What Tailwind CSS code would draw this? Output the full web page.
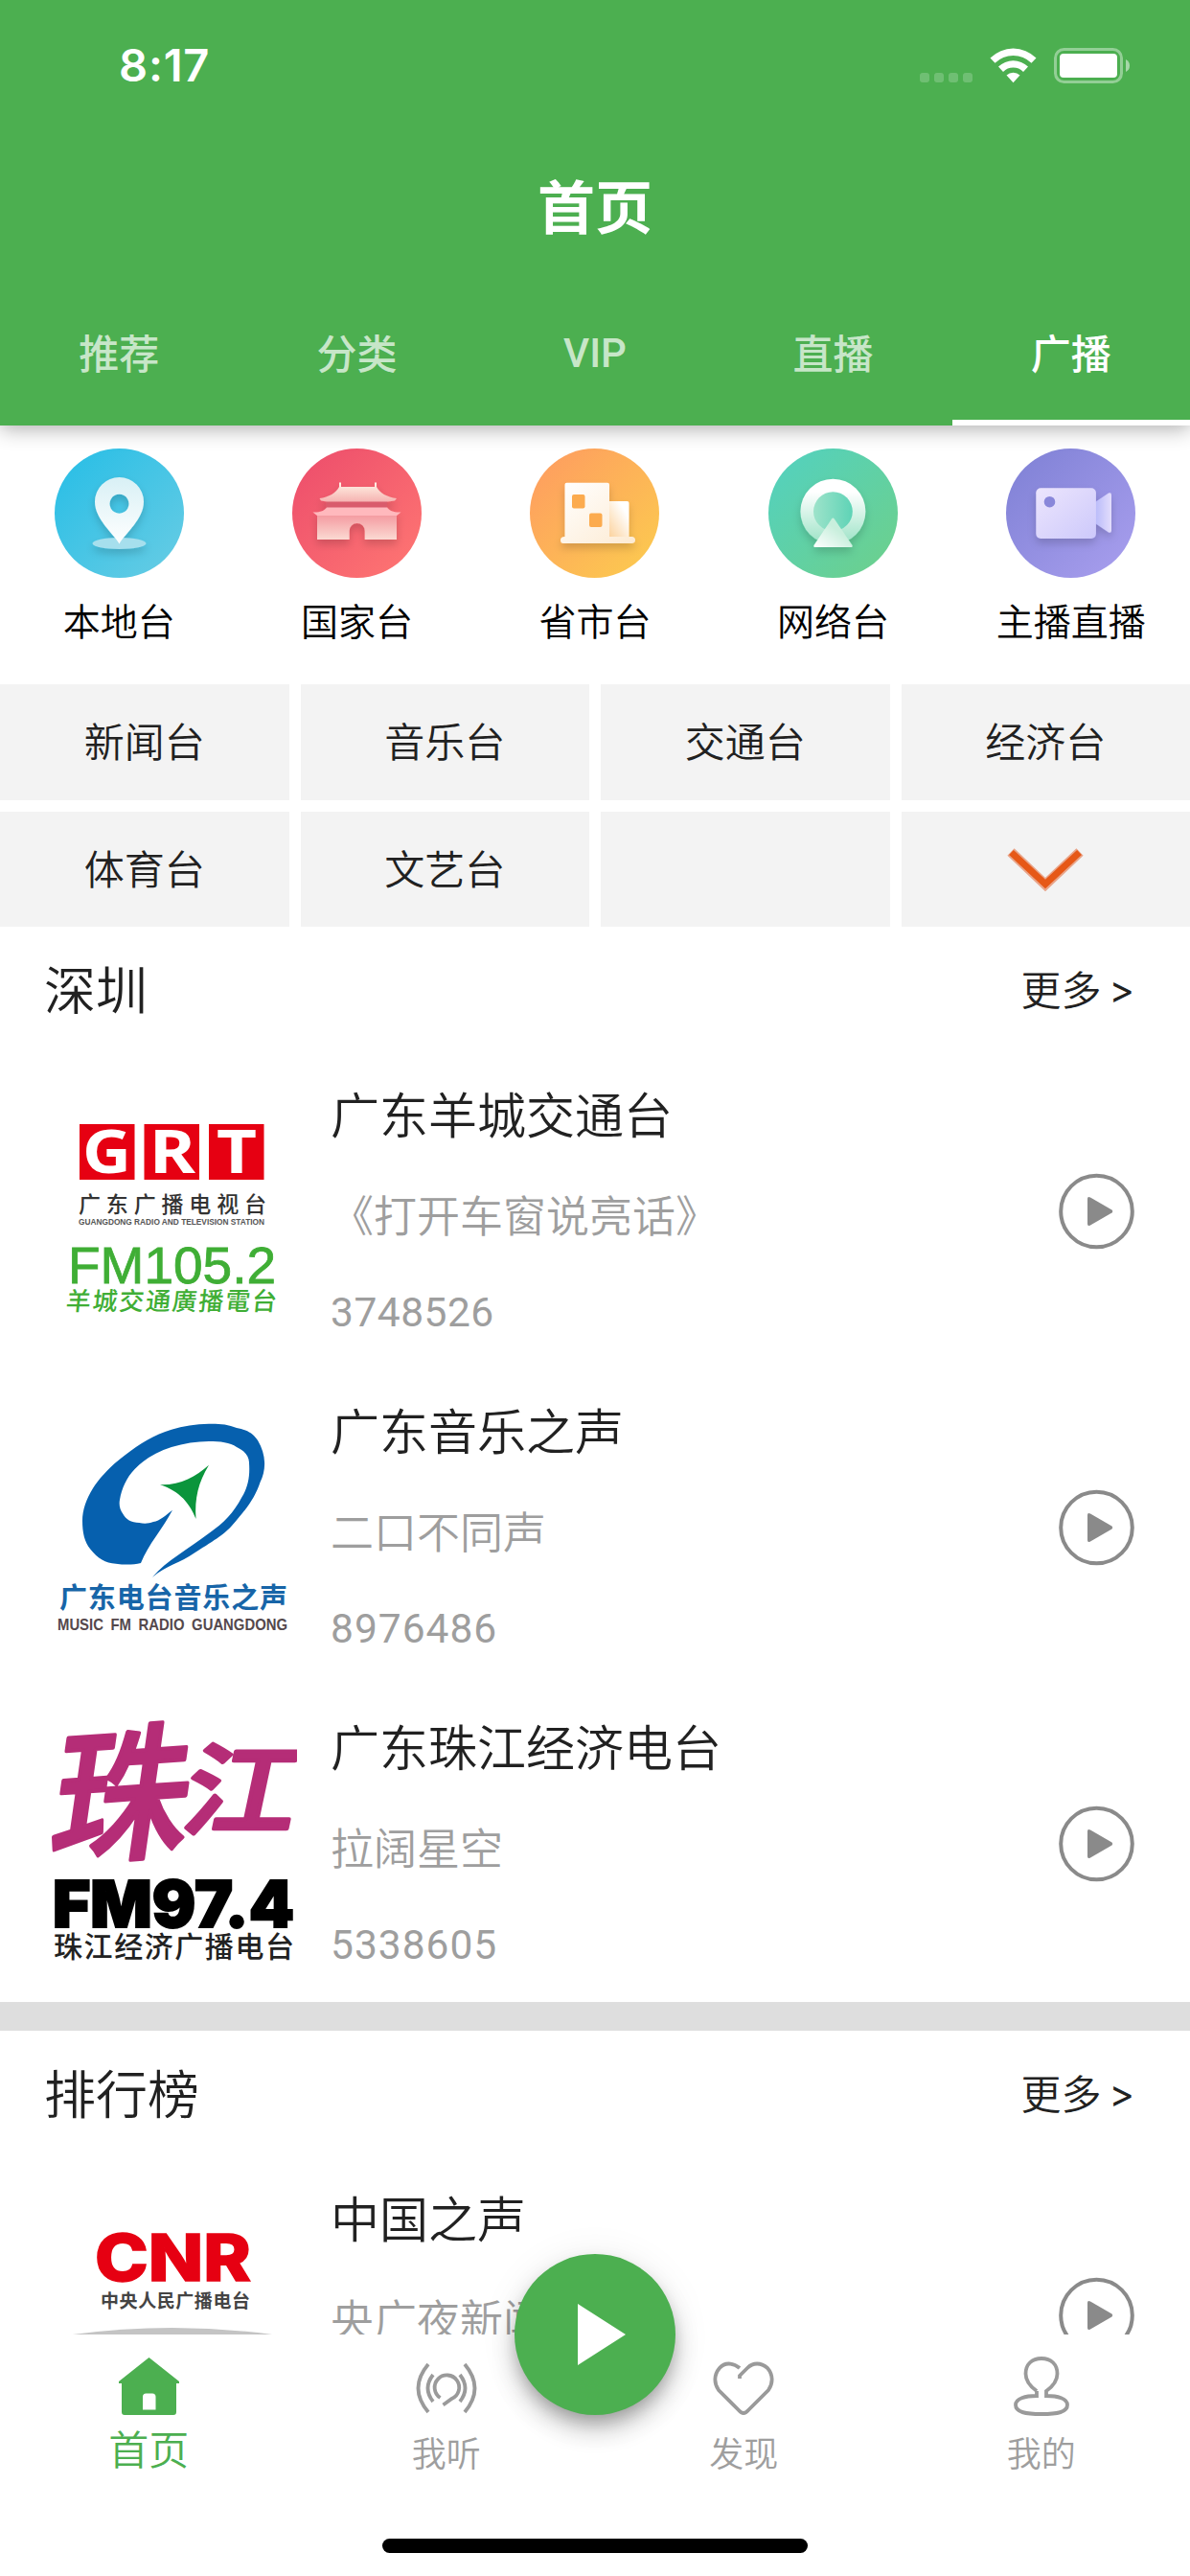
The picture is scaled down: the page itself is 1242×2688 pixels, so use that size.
<!DOCTYPE html>
<html lang="zh-CN">
<head>
<meta charset="utf-8">
<title>首页</title>
<script src="https://cdn.jsdelivr.net/npm/@tailwindcss/browser@4"></script>
</head>
<body class="bg-white">
<div class="relative flex h-[2688px] w-[1242px] flex-col overflow-hidden bg-white font-['Noto_Sans_CJK_SC',sans-serif] font-[350] text-[#212121]">

  <!-- App bar -->
  <header class="relative z-10 flex h-[444px] shrink-0 flex-col bg-[#4caf50] text-white shadow-[0_4px_20px_rgba(0,0,0,0.31)]">
    <div class="flex h-[132px] items-center justify-between pl-[124px] pr-[62px]">
      <span class="pt-[3px] font-['Inter',sans-serif] text-[47px] font-semibold leading-none tracking-[0.8px]">8:17</span>
      <svg class="mt-[3px]" width="222" height="40" viewBox="956 47 222 40">
        <g fill="#fff" fill-opacity=".2">
          <rect x="958" y="75" width="10" height="10" rx="3"/><rect x="973" y="75" width="10" height="10" rx="3"/><rect x="988" y="75" width="10" height="10" rx="3"/><rect x="1003" y="75" width="10" height="10" rx="3"/>
        </g>
        <g fill="#fff">
          <path d="M1031.5 59.5A34 34 0 0 1 1079.5 59.5L1074.5 64.7A27 27 0 0 0 1036.5 64.7Z"/>
          <path d="M1040 68.5A22.5 22.5 0 0 1 1071 68.5L1066 73.9A15 15 0 0 0 1045 73.9Z"/>
          <path d="M1048.5 77.5A10.5 10.5 0 0 1 1062.500 77.500L1055.500 85.300Z"/>
          <rect x="1104" y="55" width="60" height="25" rx="4"/>
        </g>
        <rect x="1099.500" y="50.500" width="69" height="34" rx="9" fill="none" stroke="#fff" stroke-opacity=".4" stroke-width="3"/>
        <path d="M1173 61q4 2 4 6.500t-4 6.500z" fill="#fff" fill-opacity=".5"/>
      </svg>
    </div>
    <h1 class="flex h-[168px] items-center justify-center text-[60px] font-bold leading-none"><span class="-mt-[7px]">首页</span></h1>
    <nav class="grid h-[144px] grid-cols-5 text-center text-[42px] font-medium leading-[133px]">
      <span class="text-white/70">推荐</span>
      <span class="text-white/70">分类</span>
      <span class="font-['Roboto',sans-serif] font-medium leading-[137px] text-white/70">VIP</span>
      <span class="text-white/70">直播</span>
      <span class="border-b-[6px] border-white">广播</span>
    </nav>
  </header>

  <main class="min-h-0 flex-1 overflow-hidden">
    <!-- Categories -->
    <section class="grid h-[270px] grid-cols-5 pt-6 text-[39px] leading-[87px] text-black">
      <div class="flex flex-col items-center">
        <svg width="135" height="135" viewBox="0 0 135 135">
          <defs>
            <linearGradient id="c1" x1="0" y1="0" x2="1" y2="1"><stop offset=".1" stop-color="#2cbfe6"/><stop offset=".9" stop-color="#62cbe4"/></linearGradient>
            <linearGradient id="p1" x1="0" y1="0" x2="0" y2="1"><stop offset="0" stop-color="#d8f0f5"/><stop offset="1" stop-color="#fff"/></linearGradient>
            <filter id="sh" x="-30%" y="-30%" width="160%" height="170%"><feDropShadow dx="0" dy="5" stdDeviation="4" flood-color="#000" flood-opacity=".16"/></filter>
          </defs>
          <circle cx="67.500" cy="67.500" r="67.500" fill="url(#c1)"/>
          <g filter="url(#sh)">
            <ellipse cx="67.500" cy="99" rx="28" ry="6" fill="#a6dfed"/>
            <path fill-rule="evenodd" fill="url(#p1)" d="M67.500 99.500C61 88 42 74 42 55.500A25.500 25.500 0 0 1 93 55.500C93 74 74 88 67.500 99.500ZM67.500 47.700a10 10 0 1 0 .01 0Z"/>
          </g>
        </svg>
        <span>本地台</span>
      </div>
      <div class="flex flex-col items-center">
        <svg width="135" height="135" viewBox="0 0 135 135">
          <defs>
            <linearGradient id="c2" x1="0" y1="0" x2="1" y2="1"><stop offset=".1" stop-color="#ee506c"/><stop offset=".9" stop-color="#fd7372"/></linearGradient>
            <linearGradient id="t1" x1="0" y1="0" x2="0" y2="1"><stop offset="0" stop-color="#fff3e6"/><stop offset="1" stop-color="#f6b3b1"/></linearGradient>
            <linearGradient id="t2" x1="0" y1="0" x2="0" y2="1"><stop offset="0" stop-color="#f49aa0"/><stop offset="1" stop-color="#fbd9d2"/></linearGradient>
          </defs>
          <circle cx="67.500" cy="67.500" r="67.500" fill="url(#c2)"/>
          <g filter="url(#sh)">
            <rect x="35.500" y="54" width="63.500" height="9" fill="#d95b6c"/>
            <path fill="url(#t1)" d="M49 40V35.500h2V40H86V35.500h2V40C91 46 99 51 109 52L107 54.500 100 55.500H36L30 54.500 28.500 52C38 51 46 46 49 40Z"/>
            <path fill="url(#t2)" d="M26 69H109V95H75.700V86a8 8 0 0 0-16 0V95H26Z"/>
            <path fill="#ffb9bd" d="M36 61.500H99C101 65 107 67 113.500 66.500L109 70H26L21.500 66.500C28 67 34 65 36 61.500Z"/>
          </g>
        </svg>
        <span>国家台</span>
      </div>
      <div class="flex flex-col items-center">
        <svg width="135" height="135" viewBox="0 0 135 135">
          <defs>
            <linearGradient id="c3" x1="0" y1="0" x2="1" y2="1"><stop offset=".1" stop-color="#fe9f5f"/><stop offset=".9" stop-color="#fcc850"/></linearGradient>
            <linearGradient id="b1" x1="0" y1="0" x2="1" y2="1"><stop offset="0" stop-color="#fff"/><stop offset="1" stop-color="#fdebd3"/></linearGradient>
            <linearGradient id="b2" x1="0" y1="1" x2="1" y2="0"><stop offset="0" stop-color="#fbc887"/><stop offset=".8" stop-color="#fff"/></linearGradient>
          </defs>
          <circle cx="67.500" cy="67.500" r="67.500" fill="url(#c3)"/>
          <g filter="url(#sh)">
            <rect x="78" y="55" width="25.500" height="42" rx="2" fill="url(#b2)"/>
            <path fill="url(#b1)" d="M38.500 35.700H81Q83 35.700 83 37.700V92H107Q110 92.500 110 95.500T107 99H35Q32 99 32 95.500T36.500 92V37.700Q36.500 35.700 38.500 35.700Z"/>
          </g>
          <rect x="44" y="48" width="13.500" height="14.500" rx="2" fill="#fcab4e"/>
          <rect x="62" y="67.500" width="13.500" height="14.500" rx="2" fill="#fcab4e"/>
        </svg>
        <span>省市台</span>
      </div>
      <div class="flex flex-col items-center">
        <svg width="135" height="135" viewBox="0 0 135 135">
          <defs>
            <linearGradient id="c4" x1="0" y1="0" x2="1" y2="1"><stop offset=".15" stop-color="#56d1b9"/><stop offset=".9" stop-color="#6bd08f"/></linearGradient>
            <linearGradient id="r1" x1="0" y1="0" x2="0" y2="1"><stop offset=".2" stop-color="#fff"/><stop offset=".9" stop-color="#a8e6cd"/></linearGradient>
            <linearGradient id="r2" x1="0" y1="0" x2="1" y2="0"><stop offset="0" stop-color="#9ee3ca"/><stop offset="1" stop-color="#5ed3b6"/></linearGradient>
            <linearGradient id="r3" x1="0" y1="1" x2="1" y2="0"><stop offset="0" stop-color="#fff"/><stop offset=".6" stop-color="#c9efdd"/></linearGradient>
          </defs>
          <circle cx="67.500" cy="67.500" r="67.500" fill="url(#c4)"/>
          <g filter="url(#sh)">
            <circle cx="67.400" cy="65.700" r="34" fill="url(#r1)"/>
            <circle cx="67.400" cy="65.700" r="20.400" fill="url(#r2)"/>
            <path fill="url(#r3)" d="M66 73.500q1.400-1.800 2.800 0L87.500 101q.8 2-1.500 2H49q-2.300 0-1.500-2Z"/>
          </g>
        </svg>
        <span>网络台</span>
      </div>
      <div class="flex flex-col items-center">
        <svg width="135" height="135" viewBox="0 0 135 135">
          <defs>
            <linearGradient id="c5" x1="0" y1="0" x2="1" y2="1"><stop offset=".1" stop-color="#8283d7"/><stop offset=".9" stop-color="#a59cec"/></linearGradient>
            <linearGradient id="v1" x1="0" y1="0" x2="1" y2="1"><stop offset="0" stop-color="#ece5fd"/><stop offset="1" stop-color="#cdc9fb"/></linearGradient>
            <linearGradient id="v2" x1="0" y1="0" x2="1" y2="0"><stop offset="0" stop-color="#b9bbfa"/><stop offset="1" stop-color="#e3ddfc"/></linearGradient>
          </defs>
          <circle cx="67.500" cy="67.500" r="67.500" fill="url(#c5)"/>
          <g filter="url(#sh)">
            <path fill="url(#v2)" d="M93 56L107 46.500Q110 45.500 110 48.500V85.500Q110 88.500 107 87.500L93 78Z"/>
            <rect x="31.300" y="41.300" width="62.600" height="52.700" rx="5" fill="url(#v1)"/>
          </g>
          <circle cx="45.500" cy="55.700" r="5.800" fill="#8987da"/>
        </svg>
        <span>主播直播</span>
      </div>
    </section>

    <!-- Channel types -->
    <section class="grid h-[253px] grid-cols-4 grid-rows-2 gap-3 text-center text-[42px] leading-[116px]">
      <span class="bg-[#f3f3f3]">新闻台</span>
      <span class="bg-[#f3f3f3]">音乐台</span>
      <span class="bg-[#f3f3f3]">交通台</span>
      <span class="bg-[#f3f3f3]">经济台</span>
      <span class="bg-[#f3f3f3]">体育台</span>
      <span class="bg-[#f3f3f3]">文艺台</span>
      <span class="bg-[#f3f3f3]"></span>
      <span class="flex items-center justify-center bg-[#f3f3f3]">
        <svg width="80" height="46" viewBox="0 0 80 46"><path d="M4 5 40 39 76 5" fill="none" stroke="#e9a58a" stroke-width="10.500"/><path d="M4.500 5.500 40 38.500 75.500 5.500" fill="none" stroke="#e65817" stroke-width="7"/></svg>
      </span>
    </section>

    <!-- Local stations -->
    <section class="flex flex-col">
      <div class="flex h-[132px] items-center justify-between pl-[46px] pr-[58px]">
        <h2 class="text-[54px] leading-[122px] -mt-[4px]">深圳</h2>
        <span class="text-[42px] leading-[126px]">更多<span class="relative -top-[2px] ml-[8px] inline-block font-['Inter',sans-serif] text-[40px] font-normal">&gt;</span></span>
      </div>

      <article class="flex h-[330px] items-center pl-[46px] pr-[57px]">
        <svg width="264" height="264" viewBox="0 0 264 264">
          <path fill="#e60012" d="M37 41h57.500v58H37zM104.500 41H162v58h-57.500zM172 41h57.500v58H172z"/>
          <g fill="#fff" font-family="Noto Sans, sans-serif" font-weight="700" font-size="62">
            <text x="40" y="92" textLength="51" lengthAdjust="spacingAndGlyphs">G</text>
            <text x="110" y="92" textLength="48" lengthAdjust="spacingAndGlyphs">R</text>
            <text x="180" y="92" textLength="42" lengthAdjust="spacingAndGlyphs">T</text>
          </g>
          <text x="36" y="133" font-size="23" font-weight="500" fill="#333" textLength="196">广东广播电视台</text>
          <text x="36" y="146" font-family="Liberation Sans, sans-serif" font-size="8.500" font-weight="700" fill="#555" textLength="194" lengthAdjust="spacingAndGlyphs">GUANGDONG RADIO AND TELEVISION STATION</text>
          <text x="25" y="206.500" font-family="Liberation Sans, sans-serif" font-size="54" fill="#3fae35" stroke="#3fae35" stroke-width=".8" textLength="217" lengthAdjust="spacingAndGlyphs">FM105.2</text>
          <text transform="translate(22 235) skewX(-6)" font-family="Noto Sans CJK TC, sans-serif" font-size="26" font-weight="500" fill="#3fae35" textLength="220">羊城交通廣播電台</text>
        </svg>
        <div class="ml-[35px] flex-1">
          <h3 class="text-[51px] leading-[102px]">广东羊城交通台</h3>
          <p class="text-[45px] leading-[109px] text-[#9e9e9e]">《打开车窗说亮话》</p>
          <p class="font-['Roboto',sans-serif] text-[42.500px] font-normal leading-[98px] tracking-[0.5px] text-[#9e9e9e]">3748526</p>
        </div>
        <svg width="80" height="80" viewBox="0 0 80 80" fill="#8a8a8a"><circle cx="39.500" cy="40" r="37.300" fill="none" stroke="#8a8a8a" stroke-width="4"/><path d="M30 27Q30 24 33 25.500L55.500 38.500Q57 40 55.500 41.500L33 54.500Q30 56 30 53Z"/></svg>
      </article>

      <article class="flex h-[330px] items-center pl-[46px] pr-[57px]">
        <svg width="264" height="264" viewBox="0 0 264 264">
          <path fill="#0660ae" d="M113 184C128 171 142 169 157.600 158C180 144 189 138 196 130C212 112 221 99 225.500 84.700C232 72 232 56 223 41C217 32 210 30 201 28C192 24 182 23.500 172 23.700C158 24 145 26 133 29.700C115 35 99 45 85 56C70 67 58 80 51 91C44 102 40 114 40 124.700C40 137 42 147 48.500 154.700C56 164 64 169 75 169.700C84 171 93 171 101 169C109 149 124 133 134 113.700C127 119 121 125 114 126C109 128 104 128 99.400 127C91 127 85 123 82.500 118C79 113 78 108 79 103C81 91 86 80 94.600 71C105 60 118 53 133 48C146 44 159 42 172 42C184 42 194 43 201 48C210 52 214 58 214 64.700C215 78 213 90 206 101C198 116 188 127 172 138C150 155 128 166 113 184Z"/>
          <path fill="#0b953c" d="M172 66.700C161 85 157 101 158.500 123C152 107 142 94 121 87.300C142 88 158 79 172 66.700Z"/>
          <text x="16" y="216" font-size="29" font-weight="700" fill="#1765a8" textLength="238">广东电台音乐之声</text>
          <text x="14" y="239" font-family="Liberation Sans, sans-serif" font-size="17" font-weight="700" fill="#54484c" word-spacing="4" textLength="240" lengthAdjust="spacingAndGlyphs">MUSIC FM RADIO GUANGDONG</text>
        </svg>
        <div class="ml-[35px] flex-1">
          <h3 class="text-[51px] leading-[102px]">广东音乐之声</h3>
          <p class="text-[45px] leading-[109px] text-[#9e9e9e]">二口不同声</p>
          <p class="font-['Roboto',sans-serif] text-[42.500px] font-normal leading-[98px] tracking-[1px] text-[#9e9e9e]">8976486</p>
        </div>
        <svg width="80" height="80" viewBox="0 0 80 80" fill="#8a8a8a"><circle cx="39.500" cy="40" r="37.300" fill="none" stroke="#8a8a8a" stroke-width="4"/><path d="M30 27Q30 24 33 25.500L55.500 38.500Q57 40 55.500 41.500L33 54.500Q30 56 30 53Z"/></svg>
      </article>

      <article class="flex h-[330px] items-center pl-[46px] pr-[57px]">
        <svg width="264" height="264" viewBox="0 0 264 264">
          <g fill="#b52d77" stroke="#b52d77" stroke-width="4" stroke-linejoin="round" font-weight="500">
            <text transform="translate(2 142) skewX(-12) rotate(-4)" font-size="154" textLength="142" lengthAdjust="spacingAndGlyphs">珠</text>
            <text transform="translate(140 114) skewX(-12)" font-size="104" textLength="118" lengthAdjust="spacingAndGlyphs">江</text>
          </g>
          <text x="9" y="219" font-family="Inter, sans-serif" font-size="67" font-weight="900" fill="#000" stroke="#000" stroke-width="2" textLength="252" lengthAdjust="spacingAndGlyphs">FM97.4</text>
          <text x="10" y="250" font-size="30" font-weight="500" fill="#222" textLength="251">珠江经济广播电台</text>
        </svg>
        <div class="ml-[35px] flex-1">
          <h3 class="text-[51px] leading-[102px]">广东珠江经济电台</h3>
          <p class="text-[45px] leading-[109px] text-[#9e9e9e]">拉阔星空</p>
          <p class="font-['Roboto',sans-serif] text-[42.500px] font-normal leading-[98px] tracking-[1px] text-[#9e9e9e]">5338605</p>
        </div>
        <svg width="80" height="80" viewBox="0 0 80 80" fill="#8a8a8a"><circle cx="39.500" cy="40" r="37.300" fill="none" stroke="#8a8a8a" stroke-width="4"/><path d="M30 27Q30 24 33 25.500L55.500 38.500Q57 40 55.500 41.500L33 54.500Q30 56 30 53Z"/></svg>
      </article>
    </section>

    <div class="h-[30px] bg-[#dedede]"></div>

    <!-- Ranking -->
    <section class="flex flex-col">
      <div class="flex h-[132px] items-center justify-between pl-[46px] pr-[58px]">
        <h2 class="text-[54px] leading-[122px] -mt-[4px]">排行榜</h2>
        <span class="text-[42px] leading-[126px]">更多<span class="relative -top-[2px] ml-[8px] inline-block font-['Inter',sans-serif] text-[40px] font-normal">&gt;</span></span>
      </div>
      <article class="flex h-[330px] items-center pl-[46px] pr-[57px]">
        <svg width="264" height="264" viewBox="0 0 264 264">
          <text x="53" y="96" font-family="Inter, sans-serif" font-size="67" font-weight="800" fill="#e60012" stroke="#e60012" stroke-width="1.500" textLength="163" lengthAdjust="spacingAndGlyphs">CNR</text>
          <text x="59" y="124" font-size="19" font-weight="700" fill="#444" textLength="156">中央人民广播电台</text>
          <path fill="#c4c4c4" d="M30 152Q134 138 238 152V200H30Z"/>
        </svg>
        <div class="ml-[35px] flex-1">
          <h3 class="text-[51px] leading-[102px]">中国之声</h3>
          <p class="text-[45px] leading-[109px] text-[#9e9e9e]">央广夜新闻</p>
          <p class="font-['Roboto',sans-serif] text-[42.500px] font-normal leading-[98px] text-[#9e9e9e]">&nbsp;</p>
        </div>
        <svg width="80" height="80" viewBox="0 0 80 80" fill="#8a8a8a"><circle cx="39.500" cy="40" r="37.300" fill="none" stroke="#8a8a8a" stroke-width="4"/><path d="M30 27Q30 24 33 25.500L55.500 38.500Q57 40 55.500 41.500L33 54.500Q30 56 30 53Z"/></svg>
      </article>
    </section>
  </main>

  <!-- Bottom navigation -->
  <footer class="flex h-[252px] shrink-0 flex-col bg-white">
    <nav class="grid h-[213px] grid-cols-4 pt-[23px] text-[36px] leading-[74px] text-[#9e9e9e]">
      <a class="flex flex-col items-center text-[42px] leading-[66px] text-[#4caf50]">
        <svg width="63" height="62" viewBox="0 0 63 62"><path fill="#4caf50" fill-rule="evenodd" d="M31.500 1 63 26v2H60V58q0 3-3 3H6q-3 0-3-3V28H0V26ZM25 55.500H38.500V42q0-3.500-3.500-3.500H28.500Q25 38.500 25 42Z"/></svg>
        <span>首页</span>
      </a>
      <a class="flex flex-col items-center">
        <svg width="64" height="62" viewBox="0 0 64 62" fill="none" stroke="#9a9a9a" stroke-width="3.800"><path d="M25.500 43A12.800 12.800 0 1 1 37.500 44L28.500 50.500"/><path d="M18 19Q7 33 18 47M46 19Q57 33 46 47M13 8Q-8 33 13 58M51 8Q72 33 51 58"/></svg>
        <span>我听</span>
      </a>
      <a class="flex flex-col items-center">
        <svg width="64" height="62" viewBox="0 0 64 62" fill="none" stroke="#9a9a9a" stroke-width="3.800"><path d="M28 12C21 6 12 6 7 12C1 19 1 28 6 35L27 56Q32 62 37 56L58 35C63 28 63 19 57 12C50 6 42 6 36 12L28 20V23"/></svg>
        <span>发现</span>
      </a>
      <a class="flex flex-col items-center">
        <svg width="58" height="62" viewBox="0 0 58 62" fill="none" stroke="#9a9a9a" stroke-width="3.800"><path d="M24 36V41C12 41 2 44 2 50.500C2 58 12 60 29 60S56 58 56 50.500C56 44 46 41 34 41V36C41 31 45.500 26 45.500 18C45.500 8 39 2 29 2S12.500 8 12.500 18C12.500 26 17 31 24 36"/></svg>
        <span>我的</span>
      </a>
    </nav>
    <div class="mx-auto h-[15px] w-[444px] rounded-full bg-black"></div>
  </footer>

  <!-- Floating play button -->
  <button class="absolute left-[537px] top-[2352px] z-20 flex size-[168px] items-center justify-center rounded-full bg-[#4caf50] shadow-[0_9px_15px_-3px_rgba(0,0,0,0.2),0_16px_26px_rgba(0,0,0,0.2),0_3px_40px_rgba(0,0,0,0.08)]">
    <svg class="ml-[13px]" width="50" height="64" viewBox="0 0 50 64"><path fill="#fff" d="M0 0 50 32 0 64z"/></svg>
  </button>
</div>
</body>
</html>
